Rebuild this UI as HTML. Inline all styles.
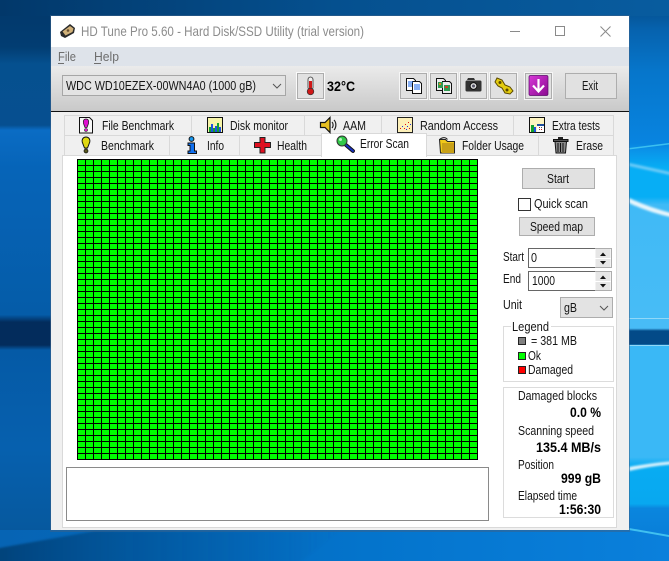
<!DOCTYPE html>
<html lang="en"><head><meta charset="utf-8"><title>HD Tune Pro 5.60</title>
<style>
html,body{margin:0;padding:0;width:669px;height:561px;overflow:hidden;background:#0660b0}
svg{display:block}
text{font-family:"Liberation Sans",sans-serif;font-size:13px;fill:#151515;white-space:pre}
.b{font-weight:bold;font-size:14px;fill:#000}
.r{shape-rendering:crispEdges}
</style></head><body>
<svg width="669" height="561" viewBox="0 0 669 561" xmlns="http://www.w3.org/2000/svg">
<defs>
<linearGradient id="lft" x1="0" y1="0" x2="0" y2="1">
<stop offset="0" stop-color="#02386a"/><stop offset=".084" stop-color="#023d72"/><stop offset=".114" stop-color="#05508f"/><stop offset=".223" stop-color="#064f90"/><stop offset=".232" stop-color="#0a6cc4"/><stop offset=".3" stop-color="#0664b8"/><stop offset=".561" stop-color="#055ca8"/><stop offset=".574" stop-color="#032c5c"/><stop offset=".615" stop-color="#032c5c"/><stop offset=".624" stop-color="#055aa6"/><stop offset=".8" stop-color="#0660ae"/><stop offset=".94" stop-color="#06599f"/><stop offset="1" stop-color="#045090"/>
</linearGradient>
<linearGradient id="rgt" x1="0" y1="0" x2="0" y2="1">
<stop offset="0" stop-color="#044a85"/><stop offset=".052" stop-color="#0662ae"/><stop offset=".128" stop-color="#0676cb"/><stop offset=".255" stop-color="#0884e0"/><stop offset=".267" stop-color="#0a92e8"/><stop offset=".3" stop-color="#07aef5"/><stop offset=".351" stop-color="#07aef5"/><stop offset=".365" stop-color="#40baf6"/><stop offset=".585" stop-color="#48bcf6"/><stop offset=".59" stop-color="#034a88"/><stop offset=".613" stop-color="#034a88"/><stop offset=".617" stop-color="#3ab8f6"/><stop offset=".815" stop-color="#3ab8f6"/><stop offset=".83" stop-color="#08acf2"/><stop offset=".898" stop-color="#08a8f0"/><stop offset=".906" stop-color="#0a86de"/><stop offset="1" stop-color="#0878d4"/>
</linearGradient>
<linearGradient id="top" x1="0" y1="0" x2="1" y2="0"><stop offset="0" stop-color="#02386a"/><stop offset=".5" stop-color="#05508f"/><stop offset="1" stop-color="#085c9f"/></linearGradient>
<linearGradient id="bot" x1="0" y1="0" x2="1" y2="0"><stop offset="0" stop-color="#0664b4"/><stop offset=".2" stop-color="#0468ba"/><stop offset=".55" stop-color="#0474cc"/><stop offset="1" stop-color="#0a80dc"/></linearGradient>
<linearGradient id="fade" x1="0" y1="0" x2="1" y2="0"><stop offset="0" stop-color="#033d70" stop-opacity=".85"/><stop offset=".4" stop-color="#034a88" stop-opacity=".55"/><stop offset="1" stop-color="#044f90" stop-opacity="0"/></linearGradient>
<linearGradient id="bar" x1="0" y1="0" x2="0" y2="1"><stop offset="0" stop-color="#ebebeb"/><stop offset="1" stop-color="#c9c9c9"/></linearGradient>
<linearGradient id="mag" x1="0" y1="0" x2="1" y2="1"><stop offset="0" stop-color="#d838d8"/><stop offset="1" stop-color="#8a0a90"/></linearGradient>
<pattern id="cells" x="77" y="159" width="8" height="6" patternUnits="userSpaceOnUse"><rect width="8" height="6" fill="#000"/><rect x="1" y="1" width="7" height="5" fill="#00ff00"/></pattern>
<filter id="soft" x="-5%" y="-5%" width="110%" height="110%"><feGaussianBlur stdDeviation="1.1"/></filter>
</defs>

<!-- desktop -->
<rect class="r" width="52" height="561" fill="url(#lft)"/>
<rect class="r" x="628" width="41" height="561" fill="url(#rgt)"/>
<rect class="r" x="0" width="669" height="16" fill="url(#top)"/>
<rect class="r" x="0" y="530" width="669" height="31" fill="url(#bot)"/>
<path d="M-6 549L95 531H340L290 570H-6Z" fill="url(#fade)" filter="url(#soft)"/>
<g filter="url(#soft)">
<path d="M629 163 L675 173 L675 176 L629 166Z" fill="#70ccf8"/>
<path d="M629 198 Q650 208 675 214 L675 218 Q650 213 629 203Z" fill="#e8f6fd"/>
<path d="M629 467 Q650 463 675 461 L675 464 Q650 466 629 471Z" fill="#e0f4fd"/>
</g>
<path d="M629 148 L669 143 L669 144.500 L629 149.500Z" fill="#3cc0f0"/>
<path d="M629 528 L669 535 L669 537 L629 530Z" fill="#40c0f0"/>
<rect class="r" x="629" y="318" width="40" height="1" fill="#90d8f8"/>
<rect class="r" x="629" y="345" width="40" height="1" fill="#90d8f8"/>

<!-- window -->
<rect class="r" x="50" y="15" width="580" height="517" fill="#3a6088" opacity=".55"/>
<rect class="r" x="51" y="16" width="578" height="514" fill="#f0f0f0"/>
<rect class="r" x="51" y="16" width="578" height="31" fill="#fff"/>
<rect class="r" x="51" y="47" width="578" height="19" fill="#dee3ea"/>
<rect class="r" x="51" y="66" width="578" height="45" fill="url(#bar)"/>
<rect class="r" x="51" y="111" width="578" height="1" fill="#111"/>

<!-- title icon -->
<path d="M60 32 L70 24 L75 28 L74 33 L65 38 L61 36Z" fill="#2a2a2a"/>
<path d="M62.500 31.500 L70 26 L73.500 28.500 L72.500 32 L65.500 35.500Z" fill="#d0b078"/>
<circle cx="68" cy="30.500" r="1.300" fill="#6a5030"/>
<text x="81" y="36" style="font-size:14px;fill:#8c8c8c" textLength="283" lengthAdjust="spacingAndGlyphs">HD Tune Pro 5.60 - Hard Disk/SSD Utility (trial version)</text>
<!-- window controls -->
<rect class="r" x="510" y="31" width="10" height="1" fill="#8a8a8a"/>
<rect class="r" x="555.500" y="26.500" width="9" height="9" fill="none" stroke="#8a8a8a"/>
<path d="M600.500 26.500 L610.500 36.500 M610.500 26.500 L600.500 36.500" stroke="#8a8a8a" fill="none"/>

<!-- menu -->
<text x="58" y="61" style="fill:#6e6e6e" textLength="18" lengthAdjust="spacingAndGlyphs">File</text>
<rect class="r" x="58" y="63" width="6" height="1" fill="#6e6e6e"/>
<text x="94" y="61" style="fill:#6e6e6e" textLength="25" lengthAdjust="spacingAndGlyphs">Help</text>
<rect class="r" x="94" y="63" width="7" height="1" fill="#6e6e6e"/>

<!-- combo -->
<rect class="r" x="62.500" y="75.500" width="223" height="20" fill="#e3e3e3" stroke="#a6a6a6"/>
<text x="66" y="90" textLength="190" lengthAdjust="spacingAndGlyphs">WDC WD10EZEX-00WN4A0 (1000 gB)</text>
<path d="M273 84 L277 88 L281 84" fill="none" stroke="#555"/>

<!-- thermo -->
<rect class="r" x="296.500" y="72.500" width="28" height="27" fill="#f4f4f4" stroke="#fafafa"/>
<rect class="r" x="297.500" y="73.500" width="26" height="25" fill="#e1e1e1" stroke="#adadad"/>
<rect x="308" y="77" width="5" height="13" rx="2.500" fill="#eee" stroke="#333" stroke-width=".8"/>
<rect x="309" y="81" width="3" height="10" fill="#d01818"/>
<circle cx="310.500" cy="91.500" r="3.300" fill="#d01818" stroke="#333" stroke-width=".7"/>
<text class="b" x="327" y="91" textLength="28" lengthAdjust="spacingAndGlyphs">32°C</text>

<!-- toolbar buttons -->
<g class="r" fill="none" stroke="#f6f6f6">
<rect x="399.500" y="72.500" width="28" height="27"/>
<rect x="429.500" y="72.500" width="28" height="27"/>
<rect x="459.500" y="72.500" width="28" height="27"/>
<rect x="489.500" y="72.500" width="28" height="27"/>
<rect x="524.500" y="72.500" width="28" height="27"/>
</g>
<g class="r" fill="#e1e1e1" stroke="#adadad">
<rect x="400.500" y="73.500" width="26" height="25"/>
<rect x="430.500" y="73.500" width="26" height="25"/>
<rect x="460.500" y="73.500" width="26" height="25"/>
<rect x="490.500" y="73.500" width="26" height="25"/>
<rect x="525.500" y="73.500" width="26" height="25"/>
<rect x="565.500" y="73.500" width="51" height="25"/>
</g>
<!-- b1 docs -->
<path d="M406.500 78.500h7l2 2v10h-9z" fill="#fff" stroke="#111"/>
<path d="M412.500 81.500h7l2 2v10h-9z" fill="#fff" stroke="#111"/>
<path d="M408 82h5M408 84h4M408 86h4M414 85h6M414 87h6M414 89h6" stroke="#1060e8" fill="none"/>
<!-- b2 docs colour -->
<path d="M436.500 78.500h7l2 2v10h-9z" fill="#eee" stroke="#111"/>
<path d="M442.500 81.500h7l2 2v10h-9z" fill="#eee" stroke="#111"/>
<rect class="r" x="438" y="82" width="5" height="6" fill="#2f9a50"/><rect class="r" x="444" y="85" width="6" height="6" fill="#2f9a50"/>
<rect class="r" x="439" y="83" width="2" height="2" fill="#e08020"/><rect class="r" x="445" y="86" width="3" height="2" fill="#d04020"/>
<!-- b3 camera -->
<path d="M468 78h6l1 2h-8z" fill="#333"/>
<rect x="465.500" y="80.500" width="16" height="11" rx="1.500" fill="#333"/>
<circle cx="473.500" cy="86" r="3.400" fill="#ddd" stroke="#111"/>
<circle cx="473.500" cy="86" r="1.500" fill="#556"/>
<!-- b4 wrench -->
<path d="M497 78l5 2 3 5 5 2 3 4-3 3-5-1-3-5-4-2-3-4z" fill="#e4cc10" stroke="#5a4a00"/>
<circle cx="500" cy="82.500" r="1.500" fill="#5a4a00"/><circle cx="507" cy="90" r="1.500" fill="#5a4a00"/>
<!-- b5 arrow -->
<rect x="529" y="75.500" width="19" height="20" rx="1.500" fill="url(#mag)" stroke="#5a0a6a" stroke-width=".7"/>
<path d="M538.500 79v12M533 85.500l5.500 6 5.500-6" fill="none" stroke="#fff" stroke-width="2.200"/>
<text x="582" y="90" textLength="16" lengthAdjust="spacingAndGlyphs">Exit</text>

<!-- tabs upper -->
<rect class="r" x="64.500" y="115.500" width="549" height="20" fill="#f0f0f0" stroke="#d9d9d9"/>
<g class="r" fill="#d9d9d9"><rect x="191" y="115" width="1" height="20"/><rect x="304" y="115" width="1" height="20"/><rect x="381" y="115" width="1" height="20"/><rect x="513" y="115" width="1" height="20"/></g>
<!-- tabs lower -->
<rect class="r" x="64.500" y="135.500" width="549" height="20" fill="#f0f0f0" stroke="#d9d9d9"/>
<g class="r" fill="#d9d9d9"><rect x="169" y="135" width="1" height="20"/><rect x="239" y="135" width="1" height="20"/><rect x="538" y="135" width="1" height="20"/></g>
<!-- panel -->
<rect class="r" x="62.500" y="155.500" width="554" height="372" fill="#fff" stroke="#d9d9d9"/>
<!-- active tab -->
<rect class="r" x="321.500" y="133.500" width="105" height="23" fill="#fff" stroke="#d9d9d9"/>
<rect class="r" x="322" y="153" width="104" height="4" fill="#fff"/>

<text x="102" y="130" textLength="72" lengthAdjust="spacingAndGlyphs">File Benchmark</text>
<text x="230" y="130" textLength="58" lengthAdjust="spacingAndGlyphs">Disk monitor</text>
<text x="343" y="130" textLength="23" lengthAdjust="spacingAndGlyphs">AAM</text>
<text x="420" y="130" textLength="78" lengthAdjust="spacingAndGlyphs">Random Access</text>
<text x="552" y="130" textLength="48" lengthAdjust="spacingAndGlyphs">Extra tests</text>
<text x="101" y="150" textLength="53" lengthAdjust="spacingAndGlyphs">Benchmark</text>
<text x="207" y="150" textLength="17" lengthAdjust="spacingAndGlyphs">Info</text>
<text x="277" y="150" textLength="30" lengthAdjust="spacingAndGlyphs">Health</text>
<text x="360" y="148" textLength="49" lengthAdjust="spacingAndGlyphs">Error Scan</text>
<text x="462" y="150" textLength="62" lengthAdjust="spacingAndGlyphs">Folder Usage</text>
<text x="576" y="150" textLength="27" lengthAdjust="spacingAndGlyphs">Erase</text>

<!-- tab icons -->
<path d="M79.500 117.500h10l3 3v12.500h-13z" fill="#f8f8f8" stroke="#111"/>
<path d="M86 119c2.500 0 3 2 2.500 4.500l-1.500 4h-2l-1.500-4c-.5-2.500 0-4.500 2.500-4.500z" fill="#e010d0" stroke="#222" stroke-width=".8"/>
<circle cx="86" cy="130" r="1.500" fill="#e010d0" stroke="#222" stroke-width=".6"/>

<rect class="r" x="207.500" y="117.500" width="15" height="15" fill="#f6f4a8" stroke="#111"/>
<g class="r"><rect x="209" y="127" width="2" height="5" fill="#10a030"/><rect x="211" y="124" width="2" height="8" fill="#2050e0"/><rect x="213" y="128" width="2" height="4" fill="#10a030"/><rect x="215" y="126" width="2" height="6" fill="#2050e0"/><rect x="217" y="123" width="2" height="9" fill="#10a030"/><rect x="219" y="127" width="2" height="5" fill="#2050e0"/></g>

<path d="M320.500 122.500h4.500l5-5v15l-5-5h-4.500z" fill="#e8c020" stroke="#111" stroke-width="1.200"/>
<path d="M332 122c1.500 1.500 1.500 4.500 0 6M334 120c2.500 2.500 2.500 7.500 0 10" fill="none" stroke="#222" stroke-width="1.200"/>

<rect class="r" x="397.500" y="117.500" width="15" height="15" fill="#fdf0b8" stroke="#222"/>
<g class="r"><rect x="400" y="128" width="1" height="1" fill="#e01010"/><rect x="402" y="126" width="1" height="1" fill="#2030e0"/><rect x="404" y="128" width="1" height="1" fill="#e01010"/><rect x="405" y="124" width="1" height="1" fill="#e01010"/><rect x="407" y="126" width="1" height="1" fill="#2030e0"/><rect x="408" y="122" width="1" height="1" fill="#e01010"/><rect x="410" y="124" width="1" height="1" fill="#2030e0"/><rect x="406" y="129" width="1" height="1" fill="#2030e0"/><rect x="409" y="128" width="1" height="1" fill="#e01010"/></g>

<rect class="r" x="529.500" y="117.500" width="15" height="15" fill="#fdf4c0" stroke="#111"/>
<g class="r"><rect x="531" y="125" width="3" height="7" fill="#10a030"/><rect x="534" y="127" width="2" height="5" fill="#2050e0"/><rect x="537" y="124" width="7" height="8" fill="#fff"/><rect x="537" y="124" width="7" height="2" fill="#2050a0"/><rect x="539" y="127" width="1" height="1" fill="#d01010"/><rect x="541" y="127" width="1" height="1" fill="#555"/><rect x="539" y="129" width="1" height="1" fill="#555"/><rect x="541" y="129" width="1" height="1" fill="#d01010"/></g>

<path d="M86 137c3 0 4.300 2.500 3.800 5l-2.300 6h-3l-2.300-6c-.5-2.500.800-5 3.800-5z" fill="#e0d810" stroke="#111"/>
<circle cx="86" cy="151" r="2" fill="#5a5a20" stroke="#111" stroke-width=".7"/>

<circle cx="191.500" cy="139" r="2.400" fill="#1898f0" stroke="#111"/>
<path d="M188 143h6.500v8h2v2.500h-8.500v-2.500h2v-5.500h-2z" fill="#1070f0" stroke="#111"/>

<path d="M260 137.500h5v5h5.500v5h-5.500v5.500h-5v-5.500h-5.500v-5h5.500z" fill="#e01020" stroke="#222"/>

<path d="M346 145l7 6" stroke="#111" stroke-width="3.800" stroke-linecap="round"/>
<path d="M346 145l7 6" stroke="#1830c0" stroke-width="2" stroke-linecap="round"/>
<circle cx="342" cy="141" r="5" fill="#30c848" stroke="#333"/>
<circle cx="340.500" cy="139.500" r="1.500" fill="#b8f0c0"/>

<path d="M439.500 139.500h6l2 2h7v11.500h-14z" fill="#f0c818" stroke="#222"/>
<rect class="r" x="442" y="143" width="12" height="10" fill="#c8a018"/>
<path d="M439.500 139.500c3-2.500 6-2.500 8 0" fill="none" stroke="#222"/>

<path d="M553.500 139.500h14.500v2h-14.500z" fill="#555" stroke="#111"/>
<path d="M555 141.500h11.500l-1 11.500h-9.500z" fill="#8a8a8a" stroke="#111"/>
<path d="M558 143v9M560.500 143v9M563 143v9" stroke="#111" fill="none"/>
<rect class="r" x="558" y="137" width="5" height="2" fill="#222"/>

<!-- grid -->
<rect class="r" x="77" y="159" width="401" height="301" fill="url(#cells)"/>
<rect class="r" x="477" y="159" width="1" height="301" fill="#000"/>
<rect class="r" x="77" y="459" width="401" height="1" fill="#000"/>

<!-- log box -->
<rect class="r" x="66.500" y="467.500" width="422" height="53" fill="#fff" stroke="#8a8a8a"/>

<!-- right controls -->
<rect class="r" x="522.500" y="168.500" width="72" height="20" fill="#e1e1e1" stroke="#adadad"/>
<text x="547" y="183" textLength="22" lengthAdjust="spacingAndGlyphs">Start</text>
<rect class="r" x="518.500" y="198.500" width="12" height="12" fill="#fff" stroke="#333"/>
<text x="534" y="208" textLength="54" lengthAdjust="spacingAndGlyphs">Quick scan</text>
<rect class="r" x="519.500" y="217.500" width="75" height="18" fill="#e1e1e1" stroke="#adadad"/>
<text x="530" y="231" textLength="53" lengthAdjust="spacingAndGlyphs">Speed map</text>

<text x="503" y="261" textLength="21" lengthAdjust="spacingAndGlyphs">Start</text>
<rect class="r" x="528.500" y="248.500" width="83" height="19" fill="#fff" stroke="#adadad"/>
<rect class="r" x="528" y="248" width="67" height="1" fill="#666"/><rect class="r" x="528" y="248" width="1" height="20" fill="#666"/><rect class="r" x="528" y="267" width="67" height="1" fill="#666"/>
<rect class="r" x="595.500" y="249" width="15" height="9" fill="#e6e6e6"/><rect class="r" x="595.500" y="259" width="15" height="8" fill="#e6e6e6"/>
<path d="M600 256l3-3.500 3 3.500zM600 261h6l-3 3.500z" fill="#111"/>
<text x="531" y="262" textLength="6" lengthAdjust="spacingAndGlyphs">0</text>

<text x="503" y="283" textLength="18" lengthAdjust="spacingAndGlyphs">End</text>
<rect class="r" x="528.500" y="271.500" width="83" height="19" fill="#fff" stroke="#adadad"/>
<rect class="r" x="528" y="271" width="67" height="1" fill="#666"/><rect class="r" x="528" y="271" width="1" height="20" fill="#666"/><rect class="r" x="528" y="290" width="67" height="1" fill="#666"/>
<rect class="r" x="595.500" y="272" width="15" height="9" fill="#e6e6e6"/><rect class="r" x="595.500" y="282" width="15" height="8" fill="#e6e6e6"/>
<path d="M600 279l3-3.500 3 3.500zM600 284h6l-3 3.500z" fill="#111"/>
<text x="532" y="285" textLength="23" lengthAdjust="spacingAndGlyphs">1000</text>

<text x="503" y="309" textLength="19" lengthAdjust="spacingAndGlyphs">Unit</text>
<rect class="r" x="560.500" y="297.500" width="52" height="20" fill="#e3e3e3" stroke="#adadad"/>
<text x="564" y="312" textLength="13" lengthAdjust="spacingAndGlyphs">gB</text>
<path d="M600 306l4 4 4-4" fill="none" stroke="#555"/>

<!-- legend -->
<rect class="r" x="503.500" y="326.500" width="110" height="55" fill="#fff" stroke="#dcdcdc"/>
<rect class="r" x="511" y="325" width="40" height="3" fill="#fff"/>
<text x="512" y="331" textLength="37" lengthAdjust="spacingAndGlyphs">Legend</text>
<rect class="r" x="518.500" y="337.500" width="7" height="7" fill="#808080" stroke="#222"/>
<text x="531" y="345" textLength="46" lengthAdjust="spacingAndGlyphs">= 381 MB</text>
<rect class="r" x="518.500" y="352.500" width="7" height="7" fill="#00ff00" stroke="#222"/>
<text x="528" y="360" textLength="13" lengthAdjust="spacingAndGlyphs">Ok</text>
<rect class="r" x="518.500" y="366.500" width="7" height="7" fill="#ff0000" stroke="#222"/>
<text x="528" y="374" textLength="45" lengthAdjust="spacingAndGlyphs">Damaged</text>

<!-- stats -->
<rect class="r" x="503.500" y="387.500" width="110" height="130" fill="#fff" stroke="#dcdcdc"/>
<text x="518" y="400" textLength="79" lengthAdjust="spacingAndGlyphs">Damaged blocks</text>
<text class="b" x="570" y="417" textLength="31" lengthAdjust="spacingAndGlyphs">0.0 %</text>
<text x="518" y="435" textLength="76" lengthAdjust="spacingAndGlyphs">Scanning speed</text>
<text class="b" x="536" y="452" textLength="65" lengthAdjust="spacingAndGlyphs">135.4 MB/s</text>
<text x="518" y="469" textLength="36" lengthAdjust="spacingAndGlyphs">Position</text>
<text class="b" x="561" y="483" textLength="40" lengthAdjust="spacingAndGlyphs">999 gB</text>
<text x="518" y="500" textLength="59" lengthAdjust="spacingAndGlyphs">Elapsed time</text>
<text class="b" x="559" y="514" textLength="42" lengthAdjust="spacingAndGlyphs">1:56:30</text>
</svg>
</body></html>
